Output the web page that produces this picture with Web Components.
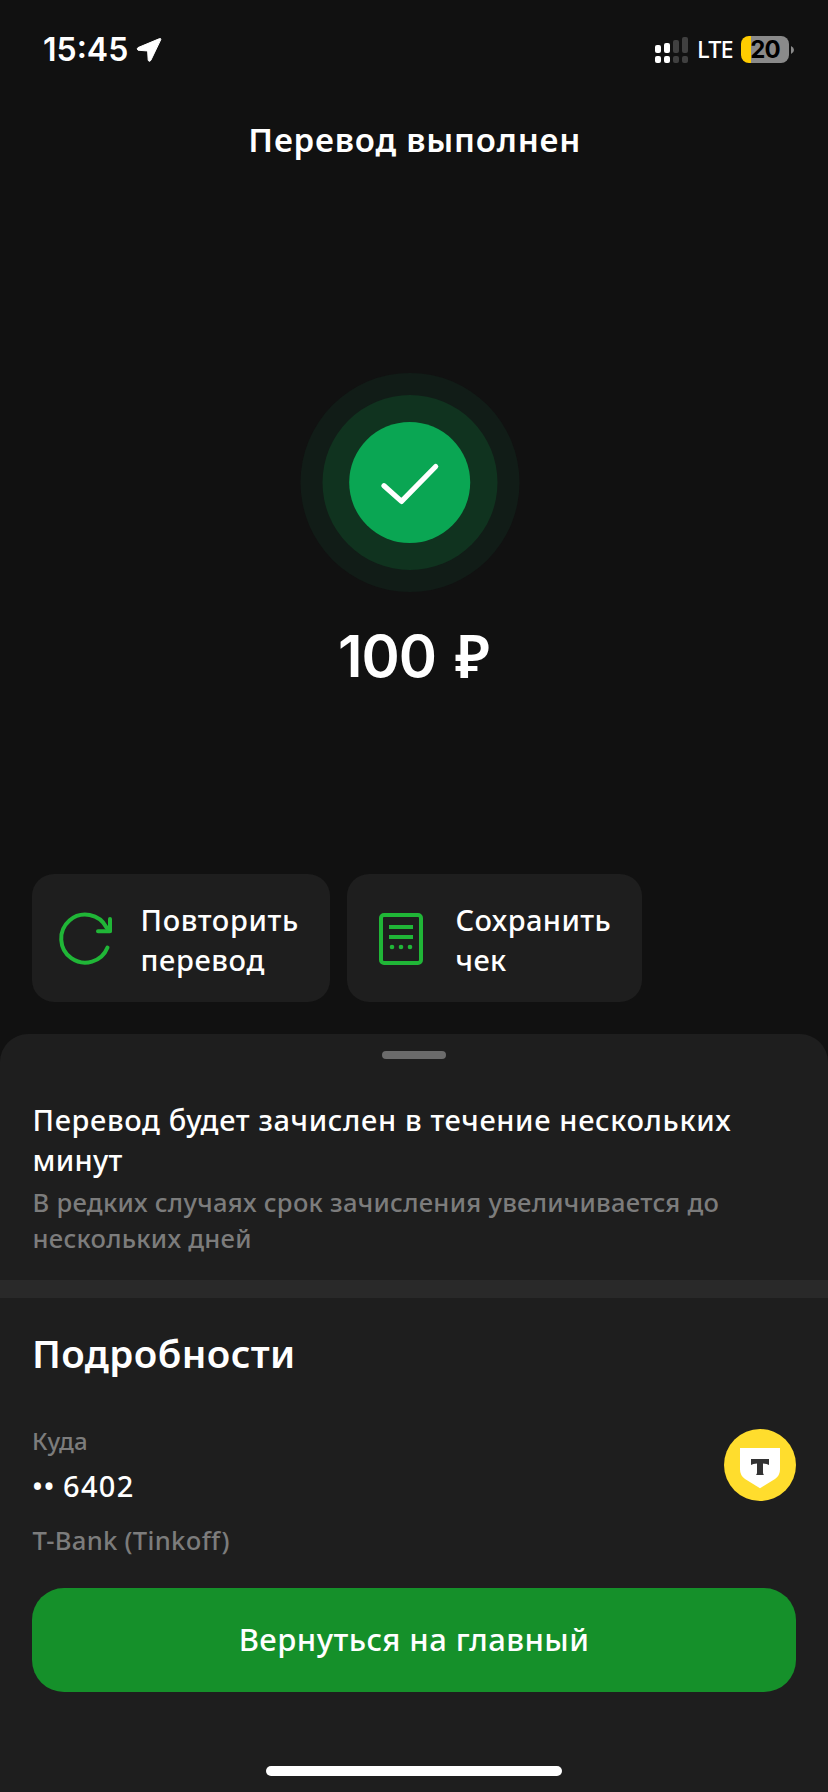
<!DOCTYPE html>
<html lang="ru">
<head>
<meta charset="utf-8">
<title>Перевод выполнен</title>
<style>
  html, body { margin: 0; background: #111; }
  body { width: 828px; height: 1792px; overflow: hidden; color: #fff; font-family: "Noto Sans", "Liberation Sans", sans-serif; }
</style>
</head>
<body>
<transfer-screen></transfer-screen>
<script>
  const define = (name, html) => {
    const template = document.createElement('template');
    template.innerHTML = html;
    customElements.define(name, class extends HTMLElement {
      constructor() {
        super();
        this.attachShadow({ mode: 'open' }).append(template.content.cloneNode(true));
      }
    });
  };

  define('status-bar', `
    <style>
      :host { display: flex; align-items: flex-start; justify-content: space-between; height: 100px; box-sizing: border-box; padding: 26px 34px 0 43px; font-family: Inter, sans-serif; }
      .left, .right { display: flex; align-items: flex-start; }
      .time { font: 600 32px/48px Inter, sans-serif; }
      .arrow { margin: 11px 0 0 8px; }
      .signal { margin-top: 11px; }
      .lte { font: 500 23.5px/38px "Noto Sans", sans-serif; margin: 4px 0 0 8px; width: 44px; white-space: nowrap; letter-spacing: -.9px }
      .battery { display: flex; align-items: center; margin-top: 10px; }
      .cell { width: 48px; height: 27px; box-sizing: border-box; border-radius: 8px; background: linear-gradient(90deg, #fc0 10px, #8a8a8a 10px); color: #000; text-align: center; font: 700 24px/28px Inter, sans-serif; letter-spacing: -1px; }
    </style>
    <div class="left">
      <span class="time">15:45</span>
      <svg class="arrow" width="26" height="26" viewBox="0 0 26 26"><path d="M23.6 1.6 2 10.6Q.4 11.8 2 13.2L10.6 13.9Q11.6 14 11.7 15L12.2 23.4Q13.4 25.2 14.8 23.4L24.8 2.6Q25 1.1 23.6 1.6Z" fill="#fff" stroke="#fff" stroke-width="1"/></svg>
    </div>
    <div class="right">
      <svg class="signal" width="34" height="27" viewBox="0 0 34 27">
        <g fill="#fff"><rect y="8" width="6" height="8" rx="2"/><rect y="19" width="6" height="7" rx="2"/><rect x="9" y="6" width="6" height="10" rx="2"/><rect x="9" y="19" width="6" height="7" rx="2"/></g>
        <g fill="#404040"><rect x="18" y="3" width="6" height="13" rx="2"/><rect x="18" y="19" width="6" height="7" rx="2"/><rect x="27" width="6" height="16" rx="2"/><rect x="27" y="19" width="6" height="7" rx="2"/></g>
      </svg>
      <span class="lte"><slot name="network"></slot></span>
      <div class="battery">
        <div class="cell"><slot name="charge"></slot></div>
        <svg width="5" height="10" viewBox="0 0 5 10"><path d="M2 1Q5 2.3 5 5T2 9Z" fill="#8a8a8a"/></svg>
      </div>
    </div>`);

  define('success-mark', `
    <style>:host { display: block; width: 220px; height: 220px; } svg { display: block; }</style>
    <svg width="220" height="220" viewBox="0 0 220 220">
      <circle cx="110" cy="110.5" r="109.5" fill="#111c17"/>
      <circle cx="110" cy="110.5" r="87.5" fill="#10331f"/>
      <circle cx="109.7" cy="110.5" r="60.5" fill="#0aa653"/>
      <path d="M84 113.7 101.5 129.4 135.7 94.5" fill="none" stroke="#fff" stroke-width="5.2" stroke-linecap="round" stroke-linejoin="round"/>
    </svg>`);

  define('money-amount', `
    <style>
      :host { display: flex; justify-content: center; font: 600 58px/70px Inter, sans-serif; letter-spacing: -1px; white-space: pre; }
      i { font: 600 59px/70px "Noto Sans", sans-serif; margin: -1px 0 0 19px; letter-spacing: 0; }
    </style>
    <slot></slot><i>₽</i>`);

  define('action-card', `
    <style>
      :host { display: flex; box-sizing: border-box; height: 128px; border-radius: 22px; background: #1e1e1e; padding: 26px 0 0 24px; font: 500 29px/40px "Noto Sans", sans-serif; white-space: nowrap; }
      .icon { width: 60px; margin-top: 8px; }
      .label { display: block; margin-left: 24.5px; }
    </style>
    <div class="icon"><slot name="icon"></slot></div>
    <div class="label"><slot></slot></div>`);

  define('bank-logo', `
    <style>:host { display: block; width: 72px; height: 72px; } svg { display: block; }</style>
    <svg width="72" height="72" viewBox="0 0 72 72">
      <circle cx="36" cy="36" r="36" fill="#ffdd2d"/>
      <path d="M16 19H56V40.5Q56 46.5 51 50L36 59.3 21 50Q16 46.5 16 40.5Z" fill="#fff"/>
      <path d="M27 30H45V36Q43.2 34.4 39 34.4V43.5Q39 45 40 46H32Q33 45 33 43.5V34.4Q28.8 34.4 27 36Z" fill="#333"/>
    </svg>`);

  define('primary-button', `
    <style>
      :host { display: block; }
      button { display: block; width: 100%; height: 104px; margin: 0; padding: 0 0 2px; border: 0; border-radius: 32px; background: #15902a; color: #fff; font: 500 31px/102px "Noto Sans", sans-serif; letter-spacing: .456px; }
    </style>
    <button><slot></slot></button>`);

  define('detail-sheet', `
    <style>
      :host { display: block; height: 758px; box-sizing: border-box; border-radius: 28px 28px 0 0; background: #1e1e1e; overflow: hidden; }
      .handle { width: 64px; height: 8px; border-radius: 4px; background: #6b6b6b; margin: 17px auto 41px; }
      .notice { padding: 0 32px 23px 32.5px; white-space: nowrap; }
      .lead { font-size: 29px; line-height: 40px; font-weight: 500; letter-spacing: .65px; }
      .sub { margin-top: 5px; font-size: 25.6px; line-height: 36px; font-weight: 500; color: #7c7c7c; letter-spacing: .27px; }
      .band { height: 18px; background: #292929; }
      .details { padding: 31px 32px 0; }
      h2 { margin: 0; font-size: 38.5px; line-height: 48px; font-weight: 600; letter-spacing: .39px; }
      .row { display: flex; justify-content: space-between; margin-top: 48px; }
      .row p { margin: 0; white-space: nowrap; color: #7c7c7c; }
      .row .cap { font-size: 24px; line-height: 32px; font-weight: 500; letter-spacing: .2px; }
      .row .card { display: flex; align-items: center; margin-top: 9px; color: #fff; font-size: 29px; line-height: 40px; font-weight: 500; letter-spacing: 1.3px; }
      .dots { letter-spacing: .6px; width: 31px; }
      .row .bank { font-size: 25.6px; line-height: 36px; font-weight: 500; margin: 17px 0 0 .5px; letter-spacing: .3px; }
      bank-logo { margin-top: 4px; }
      primary-button { margin-top: 29px; }
      .home { width: 296px; height: 10px; border-radius: 5px; background: #fff; margin: 74px auto 0; }
    </style>
    <div class="handle"></div>
    <div class="notice">
      <div class="lead">Перевод будет зачислен в течение нескольких<br><span style="letter-spacing:.3px">минут</span></div>
      <div class="sub">В редких случаях срок зачисления увеличивается до<br>нескольких дней</div>
    </div>
    <div class="band"></div>
    <div class="details">
      <h2>Подробности</h2>
      <div class="row">
        <div>
          <p class="cap">Куда</p>
          <p class="card"><span class="dots">••</span>6402</p>
          <p class="bank">T-Bank (Tinkoff)</p>
        </div>
        <bank-logo></bank-logo>
      </div>
      <primary-button>Вернуться на главный</primary-button>
    </div>
    <div class="home"></div>`);

  define('transfer-screen', `
    <style>
      :host { display: flex; flex-direction: column; width: 828px; height: 1792px; background: #111; }
      h1 { margin: 16px 0 0; padding-left: 1.5px; font-size: 33px; line-height: 48px; font-weight: 600; letter-spacing: .8px; text-align: center; }
      success-mark { margin: 208px 0 0 300px; }
      money-amount { margin-top: 29px; }
      .actions { display: flex; gap: 17px; margin: 183px 0 32px 32px; }
      .repeat { width: 298px; letter-spacing: .63px; }
      .save { width: 295px; letter-spacing: .42px; }
      svg { display: block; }
    </style>
    <status-bar><span slot="network">LTE</span><span slot="charge">20</span></status-bar>
    <h1>Перевод выполнен</h1>
    <success-mark></success-mark>
    <money-amount>100</money-amount>
    <div class="actions">
      <action-card class="repeat">
        <svg slot="icon" width="60" height="60" viewBox="0 0 60 60" fill="none" stroke="#20b637" stroke-width="4" stroke-linecap="round" stroke-linejoin="round"><path d="M51.5 39.5A24 24 0 1 1 50.5 19.5L54 22.8"/><path d="M42 23.2H54V11"/></svg>
        Повторить<br>перевод
      </action-card>
      <action-card class="save">
        <svg slot="icon" width="60" height="60" viewBox="0 0 60 60" fill="none" stroke="#20b637" stroke-width="4"><rect x="10" y="7" width="40" height="48" rx="3"/><path d="M18 19H42M18 29H42"/><g fill="#20b637" stroke="none"><circle cx="21" cy="39" r="2.3"/><circle cx="30" cy="39" r="2.3"/><circle cx="39" cy="39" r="2.3"/></g></svg>
        Сохранить<br>чек
      </action-card>
    </div>
    <detail-sheet></detail-sheet>`);
</script>
</body>
</html>
